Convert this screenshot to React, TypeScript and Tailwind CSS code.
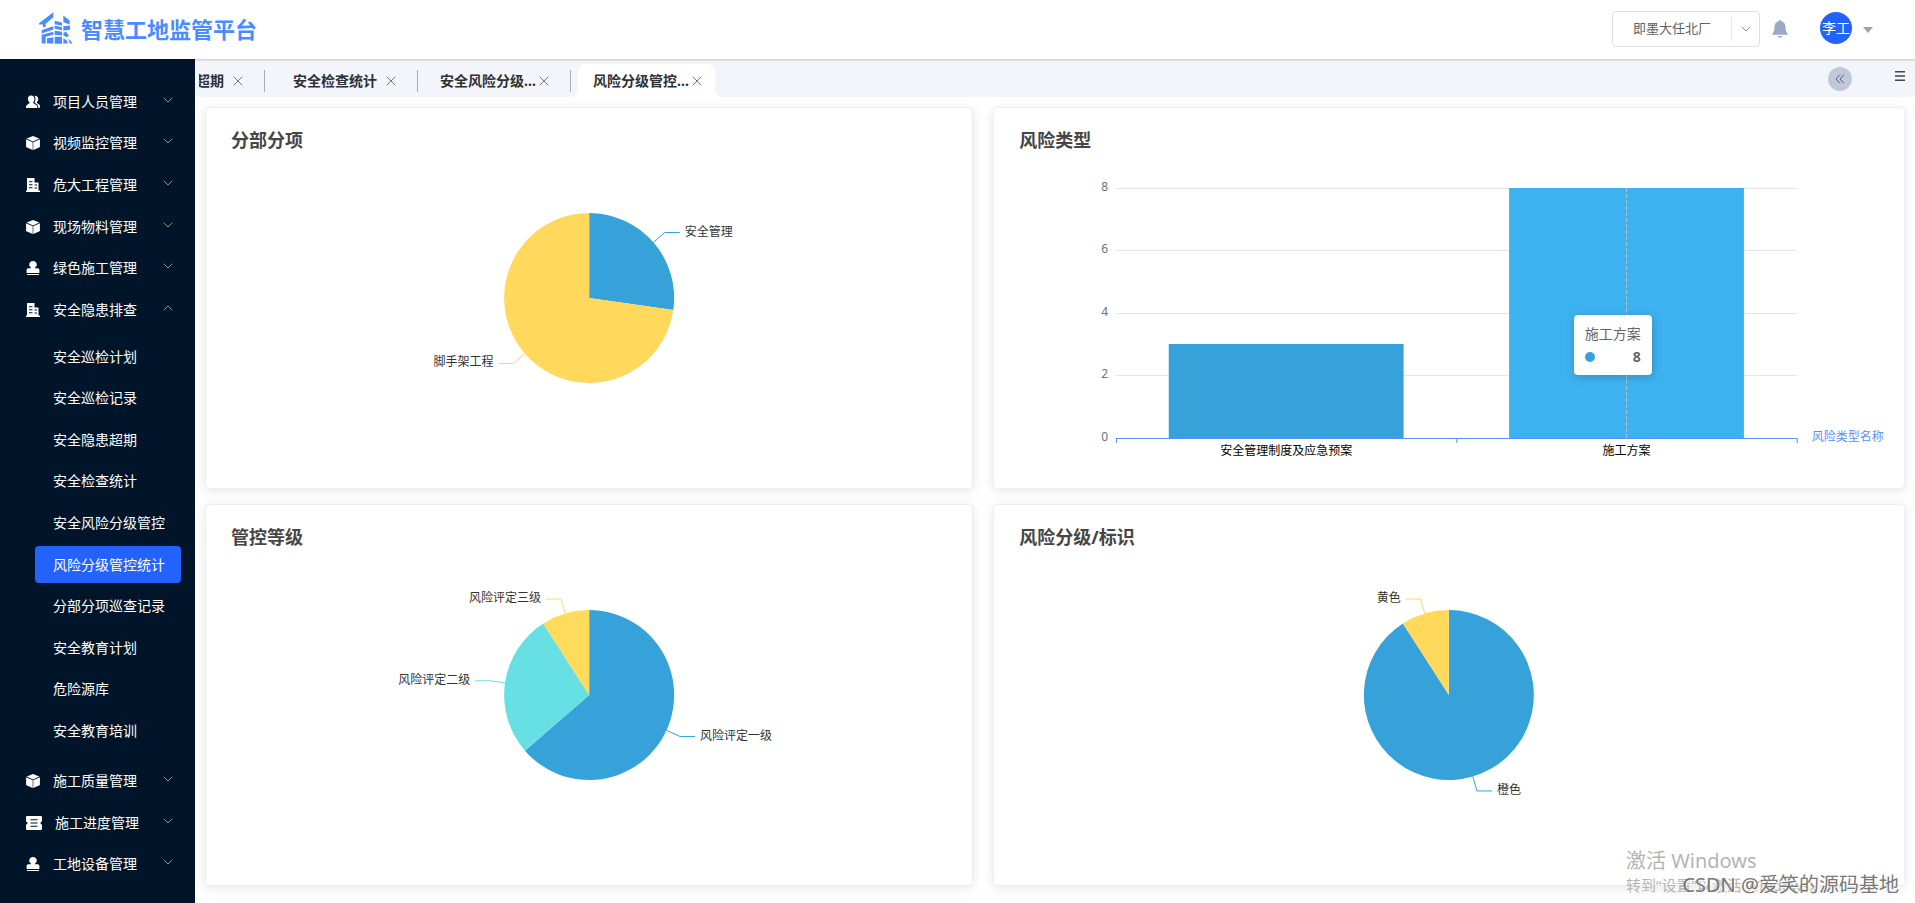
import type { ReactNode } from 'react';

type Slice = { name: string; value: number; color: string };

const UsersIcon = () => (
	<svg viewBox="0 0 15 14" className="size-[14px] fill-white">
		<path d="M5.500 0c2.200 0 3.700 1.600 3.600 3.800 0 1.500-.6 2.700-1.500 3.500v.9l3.400 1.900c.7.400 1.100 1 1.100 1.800V13.500H0v-1.600c0-.8.400-1.400 1.100-1.800l2.700-1.900v-.9C2.900 6.500 2 5.300 2 3.800 1.900 1.600 3.300 0 5.500 0z" />
		<path d="M9.500.3c2.200 0 3.600 1.400 3.600 3.500 0 1.400-.6 2.500-1.500 3.200v.9l2.400 1.700c.7.400 1 1 1 1.800v1.700h-2v-1.600c0-.9-.5-1.700-1.300-2.200L9 7.600c.8-1 1.200-2.400 1.200-3.900 0-1.300-.4-2.500-1.100-3.400z" />
	</svg>
);

const BoxIcon = () => (
	<svg viewBox="0 0 14 14" className="size-[14px] fill-white">
		<path d="M7 0l6.300 2.600L7 5.400.7 2.600z" />
		<path d="M.1 3.300L6.700 6.200V14L1 11.600c-.6-.2-.9-.7-.9-1.200z" />
		<path d="M13.900 3.300L7.300 6.200V14l5.700-2.400c.6-.2.9-.7.9-1.200z" />
	</svg>
);

const BuildingIcon = () => (
	<svg viewBox="0 0 14 14" className="size-[14px]">
		<path
			className="fill-white"
			fillRule="evenodd"
			d="M1 0H8.500v4.500h4V12.500H14V14H0v-1.500h1zM3 3.200h3.500v1H3zm0 3h3.500v1H3zm0 3h3.500v1H3zM8.500 6.500h2.500v1H8.500zm0 3h2.500v1H8.500z"
		/>
	</svg>
);

const StampIcon = () => (
	<svg viewBox="0 0 14 14" className="size-[14px] fill-white">
		<path d="M7 0c2.100 0 3.800 1.600 3.800 3.500 0 1.300-.8 2.300-1.700 2.900v.8h2.600c1 0 1.700.8 1.700 1.700V12H.6V8.900c0-.9.7-1.700 1.700-1.700h2.600v-.8C4 5.800 3.200 4.800 3.200 3.500 3.200 1.600 4.900 0 7 0z" />
		<rect x="1" y="13" width="12" height="1" />
	</svg>
);

const TicketIcon = () => (
	<svg viewBox="0 0 16 14" className="h-[14px] w-4">
		<path
			className="fill-white"
			fillRule="evenodd"
			d="M1 0h14a1 1 0 0 1 1 1v4.500a1.500 1.500 0 0 0 0 3V13a1 1 0 0 1-1 1H1a1 1 0 0 1-1-1V8.500a1.500 1.500 0 0 0 0-3V1a1 1 0 0 1 1-1zM4.500 3.300h7v1h-7zm0 3.200h7v1h-7zm0 3.200h7v1h-7z"
		/>
	</svg>
);

const Chevron = ({ className = '' }: { className?: string }) => (
	<svg viewBox="0 0 10 6" className={`h-[6px] w-[10px] fill-none ${className}`}>
		<path d="M.7.7L5 5 9.300.7" stroke="currentColor" />
	</svg>
);

const CloseIcon = () => (
	<svg viewBox="0 0 10 10" className="size-[10px]">
		<path d="M.7.700l8.600 8.600M9.300.700L.7 9.300" stroke="#777" />
	</svg>
);

const LogoIcon = () => (
	<svg viewBox="0 0 102 98" className="h-[33px] w-[34px] fill-[#4a8cff]">
		<path d="M0 33L43 0v15L20 35v9l-8 3V37H0z" />
		<path d="M20 50l23-8v10L8 64V54z" />
		<path d="M73 10l19 15v12L73 30z" />
		<path d="M47 26l22 5v10l-22-5zM73 42l20-2v13l-20 3z" />
		<path d="M47 40l22 5v9l-22-4z" />
		<path d="M8 68l35-9v9L20 74v20H8z" />
		<path d="M24 78l19-3v19H24zM47 56l22 3v11l-22-2zM47 74h22v21H47z" />
		<path d="M73 62l8-3 9 12-7 4-10-6zM73 78l10 6 4 10H73zM88 78l13 16h-9z" />
	</svg>
);

const menu: { label: string; icon: ReactNode; children?: string[] }[] = [
	{ label: '项目人员管理', icon: <UsersIcon /> },
	{ label: '视频监控管理', icon: <BoxIcon /> },
	{ label: '危大工程管理', icon: <BuildingIcon /> },
	{ label: '现场物料管理', icon: <BoxIcon /> },
	{ label: '绿色施工管理', icon: <StampIcon /> },
	{
		label: '安全隐患排查',
		icon: <BuildingIcon />,
		children: [
			'安全巡检计划',
			'安全巡检记录',
			'安全隐患超期',
			'安全检查统计',
			'安全风险分级管控',
			'风险分级管控统计',
			'分部分项巡查记录',
			'安全教育计划',
			'危险源库',
			'安全教育培训',
		],
	},
	{ label: '施工质量管理', icon: <BoxIcon /> },
	{ label: '施工进度管理', icon: <TicketIcon /> },
	{ label: '工地设备管理', icon: <StampIcon /> },
];

const activeMenu = '风险分级管控统计';

const tabs = ['安全隐患超期', '安全检查统计', '安全风险分级...', '风险分级管控...'];

function Header() {
	return (
		<header className="relative z-10 flex h-[59px] shrink-0 items-center justify-between bg-white pr-[42px] pb-[2px] pl-[39px] shadow-[0_1px_2px_rgba(0,0,0,0.2)]">
			<div className="flex items-center gap-2">
				<LogoIcon />
				<h1 className="text-[22px] leading-8 font-bold text-[#4a8cff]">智慧工地监管平台</h1>
			</div>
			<div className="flex items-center">
				<div className="relative flex h-9 items-center rounded border border-[#dcdfe6]">
					<select
						aria-label="项目"
						className="h-full w-[146px] appearance-none pr-8 pl-5 text-[13px] text-[#606266] outline-none"
					>
						<option>即墨大任北厂</option>
					</select>
					<span className="pointer-events-none absolute right-0 flex h-6 w-7 items-center justify-center border-l border-[#e4e7ed] text-[#909399]">
						<Chevron />
					</span>
				</div>
				<button aria-label="通知" className="ml-3">
					<svg viewBox="0 0 16 18" className="h-[18px] w-4 fill-[#9ca9c8]">
						<path d="M8 0c.8 0 1.300.500 1.300 1.200C12 1.800 13.500 4 13.500 6.600c0 3.400.6 5.200 1.700 6.600.5.600.8 1 .8 1.600H0c0-.6.300-1 .8-1.600 1.100-1.400 1.700-3.200 1.700-6.600C2.500 4 4 1.800 6.700 1.200 6.700.5 7.200 0 8 0zM5.700 16h4.600c-.2 1-1.100 1.700-2.300 1.700S5.900 17 5.700 16z" />
					</svg>
				</button>
				<button className="ml-8 flex items-center gap-[11px] pb-[2px]">
					<span className="flex size-8 items-center justify-center rounded-full bg-[#2362fb] text-sm text-white">李工</span>
					<svg viewBox="0 0 10 6" className="mt-1 h-[6px] w-[10px] fill-[#a0a0a0]">
						<path d="M0 0h10L5 6z" />
					</svg>
				</button>
			</div>
		</header>
	);
}

function Sidebar() {
	return (
		<aside className="flex w-[195px] shrink-0 bg-[#001529] text-sm text-white">
			<nav className="flex flex-1 flex-col pt-[22px] pb-[18px]">
				{menu.flatMap((item) => [
					<button key={item.label} className="flex min-h-10 flex-1 items-center pr-[22px] pl-[26px]">
						{item.icon}
						<span className="ml-[13px] flex-1 text-left">{item.label}</span>
						<Chevron className={item.children ? 'mb-1 rotate-180 text-[#8b929b]' : 'mb-1 text-[#8b929b]'} />
					</button>,
					item.children && (
						<ul key="sub" className="mt-[5px] mb-[9px] flex flex-[10] flex-col">
							{item.children.map((child) => (
								<li key={child} className="flex min-h-10 flex-1 items-center">
									<a
										href="#"
										className={
											child === activeMenu
												? 'mr-[14px] ml-[35px] flex-1 rounded bg-[#2362fb] py-2 pl-[18px] leading-[21px]'
												: 'mr-[14px] ml-[35px] flex-1 rounded py-2 pl-[18px] leading-[21px]'
										}
									>
										{child}
									</a>
								</li>
							))}
						</ul>
					),
				])}
			</nav>
		</aside>
	);
}

function TabBar() {
	return (
		<div className="flex h-[38px] items-end justify-between bg-[#f4f5fa] pr-[10px] pl-1">
			{/* the strip is scrolled, so the first tab is cut off */}
			<div className="flex flex-1 items-end overflow-hidden">
				{tabs.map((tab, i) => {
					const active = i === tabs.length - 1;
					return (
						<div key={tab} className={i === 0 ? '-ml-20 flex items-center' : 'flex items-center'}>
							{i > 0 && <span className="mr-[7px] ml-2 h-[22px] w-px bg-[#aaa]" />}
							<div
								className={
									active
										? 'relative flex h-[33px] w-[137px] items-center rounded-t-lg bg-white pl-3'
										: 'relative flex h-[33px] w-[137px] items-center pl-3'
								}
							>
								{active && (
									<>
										<span className="absolute bottom-0 -left-2 size-2 bg-[radial-gradient(circle_at_0_0,transparent_8px,white_8px)]" />
										<span className="absolute -right-2 bottom-0 size-2 bg-[radial-gradient(circle_at_100%_0,transparent_8px,white_8px)]" />
									</>
								)}
								<button className="w-[102px] text-center text-sm font-bold whitespace-nowrap text-[#303133]">{tab}</button>
								<button aria-label="关闭" className="pt-px">
									<CloseIcon />
								</button>
							</div>
						</div>
					);
				})}
			</div>
			<div className="flex items-center gap-[43px] self-center">
				<button aria-label="收起" className="mt-[2px] flex size-6 items-center justify-center rounded-full bg-[#bfc9d9]">
					<svg viewBox="0 0 10 10" className="size-[10px] fill-none stroke-[#606266]">
						<path d="M5 .7L1 5l4 4.300M9 .7L5 5l4 4.300" />
					</svg>
				</button>
				<button aria-label="菜单" className="pb-1">
					<svg viewBox="0 0 10 10" className="size-[10px] fill-[#444]">
						<path d="M0 0h10v1.500H0zM0 4.300h10v1.500H0zM0 8.500h10V10H0z" />
					</svg>
				</button>
			</div>
		</div>
	);
}

function Card({ title, className, children }: { title: string; className: string; children: ReactNode }) {
	return (
		<section className={`rounded border border-[#ebeef5] bg-white shadow-[0_2px_12px_rgba(0,0,0,0.1)] ${className}`}>
			<h2 className="px-[25px] pt-[18px] pb-[3px] text-lg leading-7 font-bold text-[#464646]">{title}</h2>
			{children}
		</section>
	);
}

const R = 85;

function PieChart({ data }: { data: Slice[] }) {
	const total = data.reduce((sum, d) => sum + d.value, 0);
	const point = (angle: number, r: number) => [Math.sin(angle) * r, -Math.cos(angle) * r];

	let start = 0;
	const slices = data.map((d) => {
		const end = start + (d.value / total) * Math.PI * 2;
		const mid = (start + end) / 2;
		const [x0, y0] = point(start, R);
		const [x1, y1] = point(end, R);
		const [lx, ly] = point(mid, R);
		const [ex, ey] = point(mid, R + 15);
		const side = ex > 0 ? 1 : -1;
		const path = `M0 0L${x0} ${y0}A${R} ${R} 0 ${end - start > Math.PI ? 1 : 0} 1 ${x1} ${y1}Z`;
		start = end;
		return { ...d, path, side, ex, ey, line: `${lx},${ly} ${ex},${ey} ${ex + side * 15},${ey}` };
	});

	return (
		<svg className="block h-[331px] w-full">
			<svg x="50%" y="141" className="overflow-visible">
				{slices.map((s) => (
					<g key={s.name}>
						<path d={s.path} fill={s.color} />
						<polyline points={s.line} fill="none" stroke={s.color} />
						<text
							x={s.ex + s.side * 20}
							y={s.ey + 3}
							textAnchor={s.side > 0 ? 'start' : 'end'}
							className="fill-[#333] text-xs"
						>
							{s.name}
						</text>
					</g>
				))}
			</svg>
		</svg>
	);
}

const ticks = [
	{ value: 8, y: 31 },
	{ value: 6, y: 93 },
	{ value: 4, y: 156 },
	{ value: 2, y: 218 },
	{ value: 0, y: 281 },
];

function BarChart() {
	return (
		<div className="relative mr-[107px] ml-[122px]">
			<svg className="block h-[331px] w-full overflow-visible">
				{ticks.map((t) => (
					<g key={t.value}>
						<rect y={t.y} width="100%" height="1" fill="#e0e6f1" />
						<text x="-8" y={t.y + 3} textAnchor="end" className="fill-[#6e7079] text-xs">
							{t.value}
						</text>
					</g>
				))}
				<rect x="7.75%" y="187" width="34.5%" height="94" fill="#37a2da" />
				<rect x="57.75%" y="31" width="34.5%" height="250" fill="#3db2f0" />
				<line x1="75%" x2="75%" y1="31" y2="281" stroke="#b9bec9" strokeDasharray="4 2" />
				<rect y="281" width="100%" height="1" fill="#5b8ff9" />
				<rect y="281" width="1" height="5" fill="#5b8ff9" />
				<rect x="50%" y="281" width="1" height="5" fill="#5b8ff9" />
				<rect x="100%" y="281" width="1" height="5" fill="#5b8ff9" />
				<text x="25%" y="298" textAnchor="middle" className="fill-black text-xs">
					安全管理制度及应急预案
				</text>
				<text x="75%" y="298" textAnchor="middle" className="fill-black text-xs">
					施工方案
				</text>
				<text x="100%" y="284" dx="15" className="fill-[#5b8ff9] text-xs">
					风险类型名称
				</text>
			</svg>
			<div className="absolute top-[158px] right-1/4 -mr-[25px] w-[78px] rounded bg-white px-[11px] py-[7px] text-sm leading-[23px] text-[#666] shadow-[1px_2px_10px_rgba(0,0,0,0.2)]">
				<div>施工方案</div>
				<div className="flex items-center justify-between">
					<span className="size-[10px] rounded-full bg-[#37a2da]" />
					<span className="font-bold">8</span>
				</div>
			</div>
		</div>
	);
}

export default function App() {
	return (
		<div className="relative flex min-h-screen flex-col bg-white font-['Noto_Sans','Noto_Sans_CJK_SC',sans-serif]">
			<Header />
			<div className="flex flex-1">
				<Sidebar />
				<main className="min-w-0 flex-1">
					<TabBar />
					<div className="grid grid-cols-24 gap-x-5 gap-y-[15px] px-[10px] pt-[10px] pb-4">
						<Card title="分部分项" className="col-span-11">
							<PieChart
								data={[
									{ name: '安全管理', value: 3, color: '#37a2da' },
									{ name: '脚手架工程', value: 8, color: '#ffd85c' },
								]}
							/>
						</Card>
						<Card title="风险类型" className="col-span-13">
							<BarChart />
						</Card>
						<Card title="管控等级" className="col-span-11">
							<PieChart
								data={[
									{ name: '风险评定一级', value: 7, color: '#37a2da' },
									{ name: '风险评定二级', value: 3, color: '#67e0e3' },
									{ name: '风险评定三级', value: 1, color: '#ffdb5c' },
								]}
							/>
						</Card>
						<Card title="风险分级/标识" className="col-span-13">
							<PieChart
								data={[
									{ name: '橙色', value: 10, color: '#37a2da' },
									{ name: '黄色', value: 1, color: '#ffd85c' },
								]}
							/>
						</Card>
					</div>
				</main>
			</div>

			<div className="pointer-events-none absolute right-0 bottom-2 w-[289px] whitespace-nowrap text-[#b4b4b4]">
				<p className="text-xl leading-7">激活 Windows</p>
				<p className="text-[15px] leading-5">转到“设置”以激活 Windows。</p>
			</div>
			<p className="pointer-events-none absolute right-4 bottom-1 text-xl leading-7 text-[#666]/90 [text-shadow:1px_1px_0_white]">
				CSDN @爱笑的源码基地
			</p>
		</div>
	);
}
